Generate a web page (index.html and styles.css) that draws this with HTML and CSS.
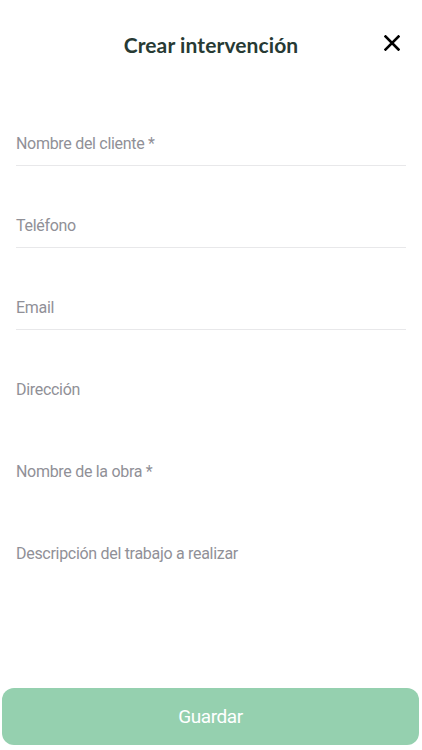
FILE: index.html
```html
<!DOCTYPE html>
<html lang="es">
<head>
<meta charset="utf-8">
<title>Crear intervención</title>
<link rel="stylesheet" href="styles.css">
</head>
<body>
<div class="screen">
  <header class="header">
    <h1 class="title">Crear intervención</h1>
    <button class="close" aria-label="Cerrar">
      <svg width="16" height="16" viewBox="0 0 16 16"><path d="M1.5 1.5 L14.5 14.5 M14.5 1.5 L1.5 14.5" stroke="#000" stroke-width="2.6" stroke-linecap="square" fill="none"/></svg>
    </button>
  </header>
  <form class="form">
    <div class="field lined"><span class="label">Nombre del cliente *</span></div>
    <div class="field lined"><span class="label">Teléfono</span></div>
    <div class="field lined"><span class="label">Email</span></div>
    <div class="field"><span class="label">Dirección</span></div>
    <div class="field"><span class="label">Nombre de la obra *</span></div>
    <div class="field"><span class="label">Descripción del trabajo a realizar</span></div>
  </form>
  <div class="footer">
    <button class="save">Guardar</button>
  </div>
</div>
</body>
</html>
```
FILE: styles.css
```css
* { box-sizing: border-box; }
html, body { margin: 0; padding: 0; background: #fff; }
.screen {
  width: 422px;
  height: 750px;
  display: flex;
  flex-direction: column;
}
.header {
  height: 84px;
  padding-top: 4px;
  display: flex;
  align-items: center;
  justify-content: center;
  position: relative;
}
.title {
  margin: 0;
  font-family: Lato, "Open Sans", sans-serif;
  font-weight: 700;
  font-size: 21px;
  color: #273a34;
  letter-spacing: 0.1px;
}
.close {
  position: absolute;
  right: 21px;
  top: 34px;
  width: 18px;
  height: 18px;
  border: 0;
  background: none;
  padding: 0;
  display: flex;
  align-items: center;
  justify-content: center;
}
.form {
  display: flex;
  flex-direction: column;
  padding: 0 16px;
}
.field {
  height: 82px;
  display: flex;
  align-items: flex-start;
  padding-top: 49px;
}
.field.lined {
  border-bottom: 1px solid #e8e8ea;
}
.label {
  font-family: Roboto, "Noto Sans", sans-serif;
  font-size: 16px;
  line-height: 22px;
  color: #909097;
  letter-spacing: -0.3px;
}
.footer {
  margin-top: auto;
  padding: 0 3px 5px 2px;
}
.save {
  width: 100%;
  height: 57px;
  border: 0;
  border-radius: 12px;
  background: #95d0af;
  color: #fff;
  font-family: Roboto, "Noto Sans", sans-serif;
  font-size: 19px;
  letter-spacing: -0.4px;
}
```
